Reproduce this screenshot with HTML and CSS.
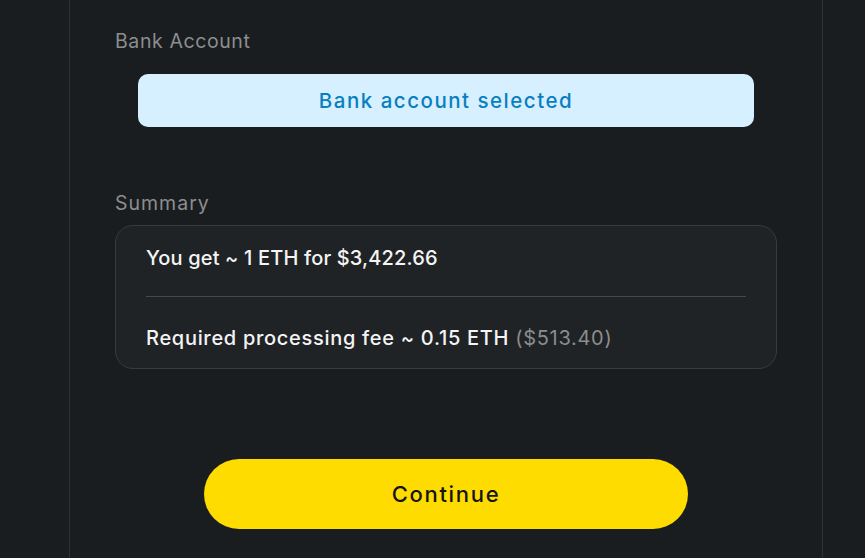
FILE: index.html
```html
<!DOCTYPE html>
<html>
<head>
<meta charset="utf-8">
<link rel="stylesheet" href="styles.css">
</head>
<body>
<div class="panel">
  <div class="label label-bank">Bank Account</div>
  <div class="bank-box">Bank account selected</div>
  <div class="label label-summary">Summary</div>
  <div class="summary">
    <div class="row row-first">You get ~ 1 ETH for $3,422.66</div>
    <div class="divider"></div>
    <div class="row row-second">Required processing fee ~ 0.15 ETH <span class="muted">($513.40)</span></div>
  </div>
  <div class="actions">
    <button class="continue">Continue</button>
  </div>
</div>
</body>
</html>
```

FILE: styles.css
```css
html, body {
  margin: 0;
  padding: 0;
  background: #1a1d20;
  height: 100%;
  overflow: hidden;
}
body {
  font-family: "Inter", "DejaVu Sans", sans-serif;
}
.panel {
  margin-left: 69px;
  width: 754px;
  height: 558px;
  border-left: 1px solid #2e3236;
  border-right: 1px solid #2e3236;
  padding: 29px 45px 0 45px;
  box-sizing: border-box;
  display: flex;
  flex-direction: column;
}
.label {
  color: #8c8e90;
  font-size: 19.5px;
  line-height: 24px;
  font-weight: 400;
  letter-spacing: 0.6px;
}
.label-summary {
  margin-top: 64px;
  letter-spacing: 1px;
}
.bank-box {
  margin: 21px 23px 0 23px;
  height: 53px;
  border-radius: 10px;
  background: #d6f0ff;
  color: #0a7fc0;
  font-size: 20.5px;
  font-weight: 500;
  display: flex;
  align-items: center;
  justify-content: center;
  letter-spacing: 1.5px;
}
.summary {
  margin-top: 10px;
  border: 1px solid #373a3e;
  background: #202326;
  border-radius: 18px;
  height: 144px;
  box-sizing: border-box;
  padding: 17px 30px 0 30px;
  display: flex;
  flex-direction: column;
}
.row {
  color: #f4f4f4;
  font-size: 20px;
  line-height: 30px;
  font-weight: 500;
}
.row-first {
  letter-spacing: 0.15px;
}
.row-second {
  margin-top: 26px;
  letter-spacing: 0.7px;
}
.row .muted {
  color: #8c8c8c;
  font-weight: 400;
}
.divider {
  height: 1px;
  background: #45484c;
  margin-top: 23px;
}
.actions {
  margin-top: 90px;
  display: flex;
  justify-content: center;
}
.continue {
  width: 484px;
  height: 70px;
  border: none;
  border-radius: 35px;
  background: #ffdc00;
  color: #141414;
  font-family: inherit;
  font-size: 22px;
  font-weight: 500;
  letter-spacing: 1.7px;
}
```
